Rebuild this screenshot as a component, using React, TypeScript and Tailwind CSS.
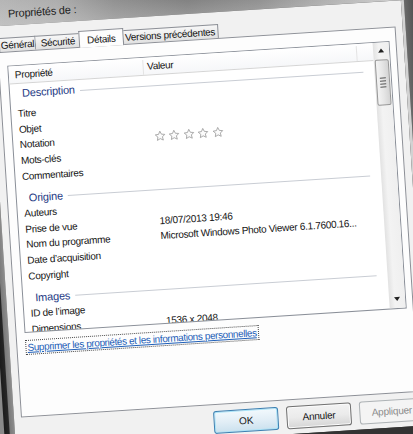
import type { ReactNode } from 'react';

type Item = { label: string; value?: ReactNode };

function Star() {
  return (
    <svg width="12" height="12" viewBox="0 0 24 24" className="shrink-0">
      <path
        d="M12 2.5l2.9 6.1 6.6.8-4.9 4.6 1.3 6.6L12 17.3l-5.9 3.3 1.3-6.6-4.9-4.6 6.6-.8z"
        fill="#fbfbfb"
        stroke="#9a9a9a"
        strokeWidth="1.6"
        strokeLinejoin="round"
      />
    </svg>
  );
}

function Stars() {
  return (
    <div className="flex gap-[2.4px]">
      {[0, 1, 2, 3, 4].map((i) => (
        <Star key={i} />
      ))}
    </div>
  );
}

const groups: { title: string; items: Item[] }[] = [
  {
    title: 'Description',
    items: [
      { label: 'Titre' },
      { label: 'Objet' },
      { label: 'Notation', value: <Stars /> },
      { label: 'Mots-clés' },
      { label: 'Commentaires' },
    ],
  },
  {
    title: 'Origine',
    items: [
      { label: 'Auteurs' },
      { label: 'Prise de vue', value: '18/07/2013 19:46' },
      { label: 'Nom du programme', value: 'Microsoft Windows Photo Viewer 6.1.7600.16...' },
      { label: 'Date d’acquisition' },
      { label: 'Copyright' },
    ],
  },
  {
    title: 'Images',
    items: [{ label: 'ID de l’image' }, { label: 'Dimensions', value: '1536 x 2048' }],
  },
];

function Group({ title, first }: { title: string; first?: boolean }) {
  return (
    <div className={first ? 'flex h-[22px] shrink-0 items-start pt-[2px]' : 'flex h-[21.5px] shrink-0 items-start pt-[6.5px]'}>
      <span className="pl-[12px] text-[11px] leading-[14px] tracking-[-0.2px] text-[#1e3a84]">{title}</span>
      <div className="ml-[5px] mr-[11px] mt-[7.5px] h-px flex-1 bg-[#c9cdd4]" />
    </div>
  );
}

function Row({ item }: { item: Item }) {
  return (
    <div className="flex h-[15.7px] shrink-0 items-center text-[10px] leading-[15.7px] tracking-[-0.3px]">
      <div className="w-[135px] shrink-0 whitespace-nowrap pl-[6.5px]">{item.label}</div>
      <div className="whitespace-nowrap pl-[6px]">{item.value}</div>
    </div>
  );
}

const tabIdle =
  'flex h-[14px] shrink-0 items-center justify-center border border-b-0 border-[#8c8f96] bg-[linear-gradient(180deg,#f7f7f7,#e1e1e1)] leading-none';

export default function App() {
  return (
    <div className="h-[434px] w-[413px] overflow-hidden bg-[#2b2b2b] font-['Liberation_Sans',Arial,sans-serif] text-[#151515]">
      <div className="-ml-[30px] -mt-[40px] flex h-[520px] w-[480px] origin-[30px_40px] -rotate-[3.7deg] flex-col bg-[#343434]">
        {/* title bar */}
        <div className="h-[66px] shrink-0 bg-[linear-gradient(180deg,rgba(50,50,50,0.35)_0%,rgba(0,0,0,0)_55%,rgba(220,220,220,0.35)_100%),linear-gradient(90deg,#b4b4b4_6%,#a9a9a9_18%,#868686_30%,#6e6e6e_45%,#7a7a7a_60%,#a2a2a2_75%,#c6c6c6_88%,#b2b2b2_100%)] pl-[37px] pt-[47px] text-[11px] leading-[15px] tracking-[-0.2px] text-[#1d1d1d]">
          Propriétés de :
        </div>

        <div className="flex h-[426px] shrink-0">
          <div className="w-[16.5px] shrink-0 bg-[linear-gradient(90deg,#8a8a8a_0%,#8a8a8a_34%,#1c1c1c_40%,#262626_66%,#7a7a7a_72%,#8e8e8e_100%)]" />

          {/* client */}
          <div className="flex w-[413.5px] shrink-0 flex-col bg-[#f1f1f1]">
            <div className="flex h-[26px] shrink-0 items-end pl-[9.5px] text-[10px] tracking-[-0.3px]">
              <div className={`${tabIdle} w-[37px]`}>Général</div>
              <div className={`${tabIdle} w-[45px] border-l-0`}>Sécurité</div>
              <div className="relative z-10 -mx-[2px] -mb-px flex h-[17.5px] w-[45px] shrink-0 items-start justify-center border border-b-0 border-[#8c8f96] bg-[#fdfdfd] pt-[2px] leading-[14px]">
                Détails
              </div>
              <div className={`${tabIdle} w-[97px]`}>Versions précédentes</div>
            </div>

            {/* tab panel */}
            <div className="ml-[7px] flex h-[366px] w-[399.5px] shrink-0 flex-col border border-[#8c8f96] bg-[#fdfdfd]">
              <div className="ml-[8.5px] mt-[12.5px] flex h-[268px] w-[383px] shrink-0 overflow-hidden border border-[#8a8f98] bg-white">
                <div className="flex w-[365px] shrink-0 flex-col overflow-hidden">
                  <div className="flex h-[18.5px] shrink-0 border-b border-[#d5d5d5] bg-[linear-gradient(180deg,#ffffff,#f6f7f9)] pt-[2.5px] text-[10px] leading-[14px] tracking-[-0.3px]">
                    <div className="w-[135px] shrink-0 border-r border-[#e4e4e4] pl-[6px]">Propriété</div>
                    <div className="w-[214px] shrink-0 border-r border-[#e4e4e4] pl-[3.5px]">Valeur</div>
                    <div className="flex-1" />
                  </div>
                  {groups.map((g, gi) => (
                    <div key={g.title} className="flex shrink-0 flex-col">
                      <Group title={g.title} first={gi === 0} />
                      {g.items.map((it) => (
                        <Row key={it.label} item={it} />
                      ))}
                    </div>
                  ))}
                </div>

                {/* scrollbar */}
                <div className="flex w-[16px] shrink-0 flex-col bg-[linear-gradient(90deg,#e2e2e2,#f3f3f3_35%,#efefef)]">
                  <div className="flex h-[17px] shrink-0 items-center justify-center">
                    <div className="h-0 w-0 border-x-[3.5px] border-b-[4px] border-x-transparent border-b-[#222]" />
                  </div>
                  <div className="mx-px flex h-[46px] shrink-0 flex-col items-center justify-center gap-[2px] rounded-[2px] border border-[#969696] bg-[linear-gradient(90deg,#f4f4f4,#e6e6e6_50%,#d4d4d4)]">
                    {[0, 1, 2, 3].map((i) => (
                      <div key={i} className="h-px w-[6px] bg-[#555]" />
                    ))}
                  </div>
                  <div className="flex-1" />
                  <div className="flex h-[17px] shrink-0 items-center justify-center">
                    <div className="h-0 w-0 border-x-[3.5px] border-t-[4px] border-x-transparent border-t-[#222]" />
                  </div>
                </div>
              </div>

              <div className="ml-[8.5px] mt-[7px] self-start border border-dotted border-[#4a4a4a] px-px text-[10px] leading-[13px] tracking-[-0.4px] text-[#1f5fb8] underline">
                Supprimer les propriétés et les informations personnelles
              </div>
            </div>

            {/* buttons */}
            <div className="mt-[5.5px] flex justify-end gap-[8px] pr-[3px] text-[10px] tracking-[-0.2px]">
              <div className="flex h-[23px] w-[65px] items-center justify-center rounded-[3px] border border-[#3c7fb1] bg-[linear-gradient(180deg,#f2f9fd,#e2eef6_50%,#cbe1ee)] shadow-[inset_0_0_0_1px_#a9e3f7]">
                OK
              </div>
              <div className="flex h-[23px] w-[65px] items-center justify-center rounded-[3px] border border-[#707070] bg-[linear-gradient(180deg,#f2f2f2,#ebebeb_50%,#d6d6d6)] shadow-[inset_0_0_0_1px_#fcfcfc]">
                Annuler
              </div>
              <div className="flex h-[23px] w-[65px] items-center justify-center rounded-[3px] border border-[#adb2b5] bg-[#f4f4f4] text-[#8a8a8a]">
                Appliquer
              </div>
            </div>
          </div>

          <div className="flex-1 border-l-[3px] border-[#d2d2d2] bg-[linear-gradient(90deg,#6a6a6a,#3a3a3a_40%,#4a4a4a)]" />
        </div>

        <div className="flex-1 bg-[#333333]" />
      </div>
    </div>
  );
}
